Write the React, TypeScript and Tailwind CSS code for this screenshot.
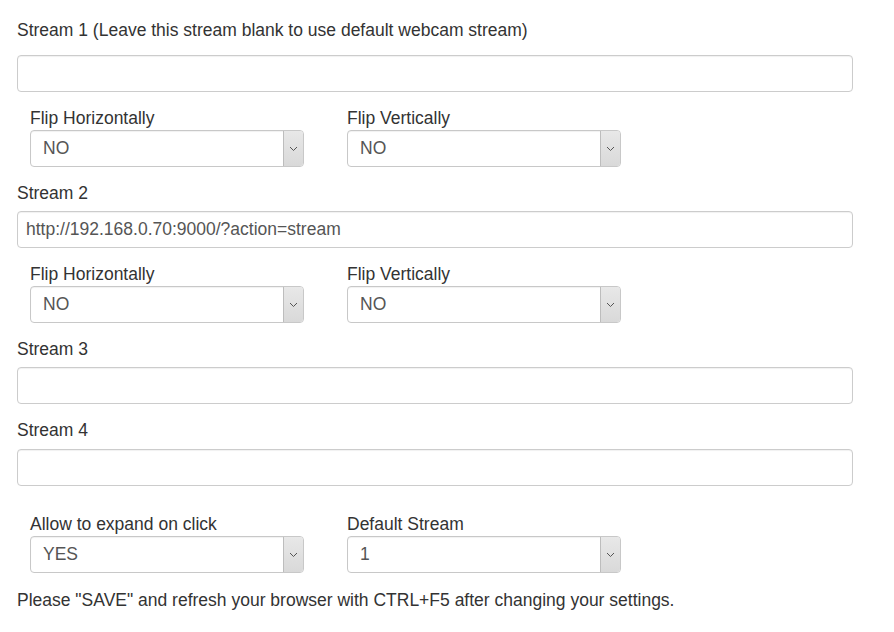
import React from "react";

function Chevron() {
  return (
    <svg width="9" height="6" viewBox="0 0 9 6" fill="none">
      <path d="M1 1 L4.5 4.5 L8 1" stroke="#555" strokeWidth="1" />
    </svg>
  );
}

function Select({ value }: { value: string }) {
  return (
    <div className="flex h-[37px] w-[274px] overflow-hidden rounded-[4px] border border-[#c8c8c8] bg-white shadow-[inset_0_1px_1px_rgba(0,0,0,0.06)]">
      <div className="flex flex-1 items-center pl-[12px] text-[17.5px] text-[#555]">{value}</div>
      <div className="flex w-[20px] items-center justify-center border-l border-[#bdbdbd] bg-gradient-to-b from-[#e8e8e8] to-[#d9d9d9]">
        <Chevron />
      </div>
    </div>
  );
}

function Input({ value }: { value?: string }) {
  return (
    <div className="flex h-[37px] w-full items-center rounded-[4px] border border-[#cccccc] bg-white pl-[8px] text-[17.5px] text-[#555] shadow-[inset_0_1px_1px_rgba(0,0,0,0.06)]">
      {value}
    </div>
  );
}

function Label({ children }: { children: React.ReactNode }) {
  return <div className="h-[24px] text-[17.5px] leading-[24px] text-[#333]">{children}</div>;
}

function SelectRow({
  a,
  av,
  b,
  bv,
  className,
}: {
  a: string;
  av: string;
  b: string;
  bv: string;
  className?: string;
}) {
  return (
    <div className={"flex pl-[13px] " + (className ?? "")}>
      <div className="w-[317px]">
        <Label>{a}</Label>
        <Select value={av} />
      </div>
      <div className="w-[317px]">
        <Label>{b}</Label>
        <Select value={bv} />
      </div>
    </div>
  );
}

export default function App() {
  return (
    <div
      className="h-[632px] w-[894px] bg-white pl-[17px] pt-[18px]"
      style={{ fontFamily: '"Liberation Sans", Arial, sans-serif' }}
    >
      <div className="w-[836px]">
        <Label>Stream 1 (Leave this stream blank to use default webcam stream)</Label>
        <div className="mt-[13px]">
          <Input />
        </div>
        <SelectRow className="mt-[14px]" a="Flip Horizontally" av="NO" b="Flip Vertically" bv="NO" />

        <div className="mt-[14px]">
          <Label>Stream 2</Label>
          <div className="mt-[6px]">
            <Input value="http://192.168.0.70:9000/?action=stream" />
          </div>
        </div>
        <SelectRow className="mt-[14px]" a="Flip Horizontally" av="NO" b="Flip Vertically" bv="NO" />

        <div className="mt-[14px]">
          <Label>Stream 3</Label>
          <div className="mt-[6px]">
            <Input />
          </div>
        </div>

        <div className="mt-[14px]">
          <Label>Stream 4</Label>
          <div className="mt-[7px]">
            <Input />
          </div>
        </div>

        <SelectRow className="mt-[26px]" a="Allow to expand on click" av="YES" b="Default Stream" bv="1" />

        <div className="mt-[15px] text-[17.5px] leading-[24px] text-[#333]">
          Please "SAVE" and refresh your browser with CTRL+F5 after changing your settings.
        </div>
      </div>
    </div>
  );
}
